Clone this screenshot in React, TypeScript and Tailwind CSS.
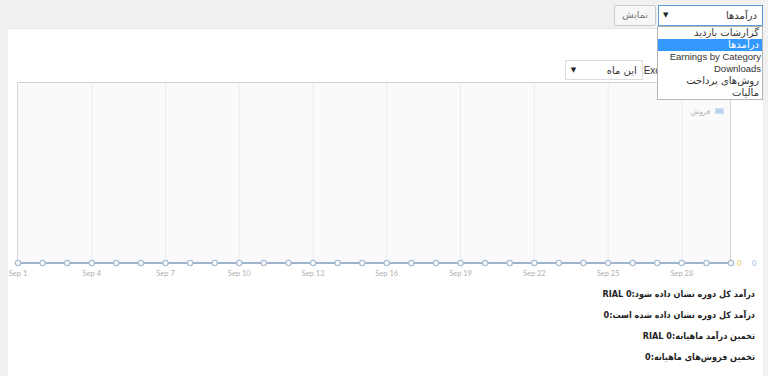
import React from "react";

const days = Array.from({ length: 30 }, (_, i) => i + 1);
const step = 713 / 29;
const px = (d: number) => 10 + (d - 1) * step;

const reportTypes = [
  { name: "گزارشات بازدید", rtl: true },
  { name: "درآمدها", rtl: true, active: true },
  { name: "Earnings by Category" },
  { name: "Downloads" },
  { name: "روش‌های پرداخت", rtl: true },
  { name: "مالیات", rtl: true },
];

const stats = [
  "درآمد کل دوره نشان داده شود:0 RIAL",
  "درآمد کل دوره نشان داده شده است:0",
  "تخمین درآمد ماهیانه:0 RIAL",
  "تخمین فروش‌های ماهیانه:0",
];

function Chart() {
  const top = 2;
  const bottom = 183;
  const left = 9;
  const right = 723;
  return (
    <svg width="755" height="200" className="block">
      <rect x={left} y={top} width={right - left} height={bottom - top} fill="#fafafa" />
      {days
        .filter((d) => (d - 1) % 3 === 0 && d > 1)
        .map((d) => (
          <line key={d} x1={px(d)} x2={px(d)} y1={top} y2={bottom} stroke="#ececec" strokeWidth="1" />
        ))}
      <rect
        x={left + 0.5}
        y={top + 0.5}
        width={right - left - 1}
        height={bottom - top}
        fill="none"
        stroke="#d4d4d4"
        strokeWidth="1"
      />
      {/* legend */}
      <rect x="707.5" y="28.5" width="8" height="5" fill="#b7d3ee" stroke="#cfe0f0" />
      <text x="702" y="33.5" fontSize="7" fill="#a8a8a8" textAnchor="end" fontFamily="DejaVu Sans, sans-serif">
        فروش
      </text>
      {/* series */}
      <line x1={px(1)} x2={px(30)} y1={bottom} y2={bottom} stroke="#9fb4c8" strokeWidth="2" />
      {days.map((d) => (
        <circle key={d} cx={px(d)} cy={bottom} r="2.6" fill="#ffffff" stroke="#a9c0d4" strokeWidth="1.3" />
      ))}
      {days
        .filter((d) => (d - 1) % 3 === 0)
        .map((d) => (
          <text
            key={d}
            x={px(d)}
            y="196"
            fontSize="7.5"
            fill="#b0b0b0"
            textAnchor="middle"
            fontFamily="Lato, sans-serif"
          >
            Sep {d}
          </text>
        ))}
      <text x="729" y="186" fontSize="7.5" fill="#e8c34a" fontFamily="Lato, sans-serif">
        0
      </text>
      <text x="744" y="186" fontSize="7.5" fill="#8fb6dc" fontFamily="Lato, sans-serif">
        0
      </text>
    </svg>
  );
}

export default function App() {
  return (
    <div className="relative w-[768px] h-[376px] overflow-hidden bg-[#f1f1f1] font-['DejaVu_Sans',sans-serif]">
      {/* Top toolbar */}
      <div className="h-[28px] flex justify-end items-start pt-[5px] pr-[5px] gap-[2px]">
        <button className="h-[21px] w-[42px] border border-[#cccccc] bg-[#f7f7f7] text-[9.5px] text-[#777] rounded-[2px]">
          نمایش
        </button>
        <div className="relative">
          <div className="h-[21px] w-[105px] border border-[#5b9dd9] bg-white flex items-center justify-between px-[4px] text-[10px] text-[#333]">
            <span className="text-[7px] text-[#222]">▼</span>
            <span dir="rtl" className="pr-[1px]">درآمدها</span>
          </div>
          <ul className="absolute right-0 top-[21px] w-[106px] z-10 border border-[#b5b5b5] bg-white text-[9.5px] leading-[12px] text-[#333] font-['Liberation_Sans','DejaVu_Sans',sans-serif]">
            {reportTypes.map((t) => (
              <li
                key={t.name}
                dir={t.rtl ? "rtl" : "ltr"}
                className={
                  t.active
                    ? "bg-[#3399ff] text-white text-right text-[10px] pr-[3px] pl-[2px] font-['DejaVu_Sans',sans-serif]"
                    : t.rtl
                      ? "text-right text-[10px] pr-[3px] pl-[2px] font-['DejaVu_Sans',sans-serif]"
                      : "text-right pr-[1px] pl-[2px]"
                }
              >
                {t.name}
              </li>
            ))}
          </ul>
        </div>
      </div>

      {/* Main panel */}
      <div className="ml-[8px] mr-[5px] h-[348px] bg-white border-t border-[#e5e5e5]">
        <div className="h-[51px] flex justify-end items-end pr-[41px]">
          <div className="flex items-center gap-[1px] text-[10px] text-[#333]">
            <div className="h-[20px] w-[78px] border border-[#dddddd] bg-white flex items-center justify-between px-[5px]">
              <span className="text-[7px] text-[#222]">▼</span>
              <span dir="rtl">این ماه</span>
            </div>
            <label className="flex items-center gap-[3px] font-['Liberation_Sans',sans-serif]">
              Exclude Taxes
              <input type="checkbox" className="w-[11px] h-[11px]" />
            </label>
          </div>
        </div>
        <Chart />
        <div
          dir="rtl"
          className="pt-[4px] pr-[8px] text-[9px] leading-[21px] font-bold text-[#222] font-['DejaVu_Sans_Condensed','DejaVu_Sans',sans-serif]"
        >
          {stats.map((s) => (
            <p key={s}>{s}</p>
          ))}
        </div>
      </div>
    </div>
  );
}
